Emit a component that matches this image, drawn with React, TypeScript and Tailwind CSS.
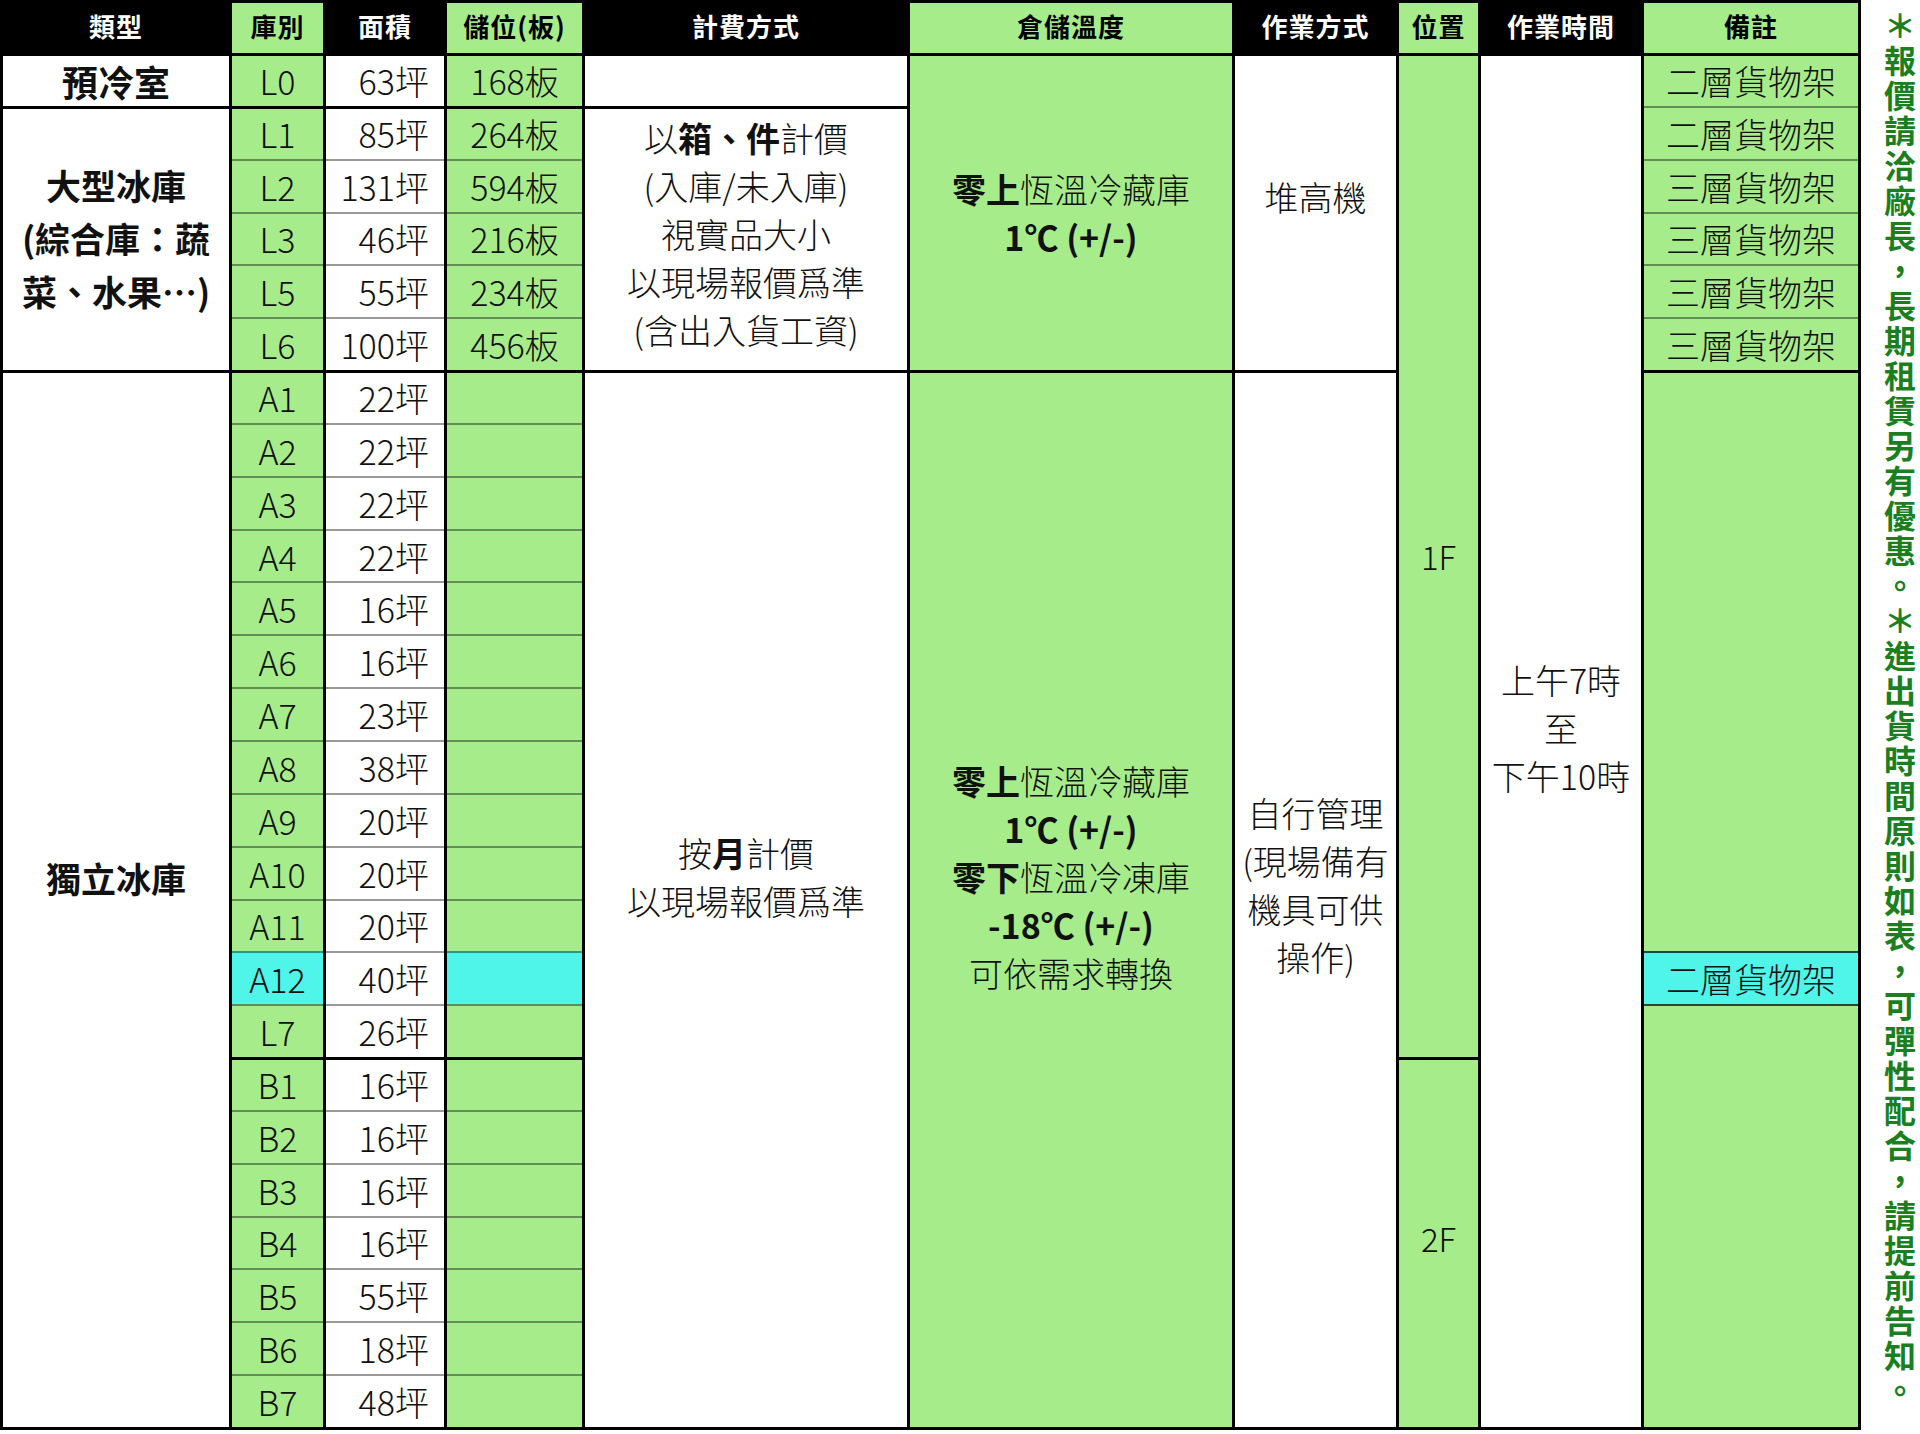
import React from "react"

const rows = [
  { k: "L0", a: "63坪", p: "168板" },
  { k: "L1", a: "85坪", p: "264板" },
  { k: "L2", a: "131坪", p: "594板" },
  { k: "L3", a: "46坪", p: "216板" },
  { k: "L5", a: "55坪", p: "234板" },
  { k: "L6", a: "100坪", p: "456板" },
  { k: "A1", a: "22坪" },
  { k: "A2", a: "22坪" },
  { k: "A3", a: "22坪" },
  { k: "A4", a: "22坪" },
  { k: "A5", a: "16坪" },
  { k: "A6", a: "16坪" },
  { k: "A7", a: "23坪" },
  { k: "A8", a: "38坪" },
  { k: "A9", a: "20坪" },
  { k: "A10", a: "20坪" },
  { k: "A11", a: "20坪" },
  { k: "A12", a: "40坪", cyan: true },
  { k: "L7", a: "26坪" },
  { k: "B1", a: "16坪" },
  { k: "B2", a: "16坪" },
  { k: "B3", a: "16坪" },
  { k: "B4", a: "16坪" },
  { k: "B5", a: "55坪" },
  { k: "B6", a: "18坪" },
  { k: "B7", a: "48坪" },
]

// index of rows that start a new group (thick black line above)
const thick = [0, 1, 6, 19]

function Head({ green, children }: { green?: boolean; children: React.ReactNode }) {
  return (
    <div
      className={`h-[50px] shrink-0 flex items-center justify-center pb-[6px] text-[26px] font-bold tracking-[1px] ${
        green ? "bg-[#a7ec8b] text-black" : "bg-black text-white"
      }`}
    >
      {children}
    </div>
  )
}

function Cell({ className, children }: { className: string; children?: React.ReactNode }) {
  return <div className={`shrink-0 flex flex-col items-center justify-center text-center ${className}`}>{children}</div>
}

const TH = "border-t-[3px] border-black"
const TN = "border-t-2 border-black/40"

export default function App() {
  return (
    <div className="w-[1920px] h-[1434px] bg-white flex font-['Noto_Sans_CJK_TC','Noto_Sans',sans-serif] text-[#111]">
      <div className="flex gap-[3px] bg-black border-[3px] border-black self-start">
        {/* 類型 */}
        <div className="flex flex-col w-[226px]">
          <Head>類型</Head>
          <Cell className={`h-[52.85px] bg-white ${TH} text-[36px] font-bold`}>預冷室</Cell>
          <Cell className={`h-[264.25px] bg-white ${TH} text-[35px] font-bold leading-[53px] pb-[4px]`}>
            <span>大型冰庫</span>
            <span>(綜合庫：蔬</span>
            <span>菜、水果…)</span>
          </Cell>
          <Cell className={`h-[1057px] bg-white ${TH} text-[35px] font-bold pb-[44px]`}>獨立冰庫</Cell>
        </div>

        {/* 庫別 */}
        <div className="flex flex-col w-[91px]">
          <Head green>庫別</Head>
          {rows.map((r, i) => (
            <Cell
              key={r.k}
              className={`h-[52.85px] text-[34px] font-light ${thick.includes(i) ? TH : TN} ${
                r.cyan ? "bg-[#4ef5e8]" : "bg-[#a7ec8b]"
              }`}
            >
              {r.k}
            </Cell>
          ))}
        </div>

        {/* 面積 */}
        <div className="flex flex-col w-[118px]">
          <Head>面積</Head>
          {rows.map((r, i) => (
            <div
              key={r.k}
              className={`h-[52.85px] shrink-0 flex items-center justify-end pr-[15px] bg-white text-[34px] font-light ${
                thick.includes(i) ? TH : TN
              }`}
            >
              {r.a}
            </div>
          ))}
        </div>

        {/* 儲位 */}
        <div className="flex flex-col w-[135px]">
          <Head green>儲位(板)</Head>
          {rows.map((r, i) => (
            <Cell
              key={r.k}
              className={`h-[52.85px] text-[34px] font-light ${thick.includes(i) ? TH : TN} ${
                r.cyan ? "bg-[#4ef5e8]" : "bg-[#a7ec8b]"
              }`}
            >
              {r.p}
            </Cell>
          ))}
        </div>

        {/* 計費方式 */}
        <div className="flex flex-col w-[322px]">
          <Head>計費方式</Head>
          <Cell className={`h-[52.85px] bg-white ${TH}`} />
          <Cell className={`h-[264.25px] bg-white ${TH} text-[34px] font-light leading-[48px] pb-[10px]`}>
            <span>
              以<b className="font-bold">箱、件</b>計價
            </span>
            <span>(入庫/未入庫)</span>
            <span>視實品大小</span>
            <span>以現場報價爲準</span>
            <span>(含出入貨工資)</span>
          </Cell>
          <Cell className={`h-[1057px] bg-white ${TH} text-[34px] font-light leading-[48px] pb-[46px]`}>
            <span>
              按<b className="font-bold">月</b>計價
            </span>
            <span>以現場報價爲準</span>
          </Cell>
        </div>

        {/* 倉儲溫度 */}
        <div className="flex flex-col w-[322px]">
          <Head green>倉儲溫度</Head>
          <Cell className={`h-[317.1px] bg-[#a7ec8b] ${TH} text-[34px] font-light leading-[48px]`}>
            <span>
              <b className="font-bold">零上</b>恆溫冷藏庫
            </span>
            <b className="font-bold">1℃ (+/-)</b>
          </Cell>
          <Cell className={`h-[1057px] bg-[#a7ec8b] ${TH} text-[34px] font-light leading-[48px] pb-[46px]`}>
            <span>
              <b className="font-bold">零上</b>恆溫冷藏庫
            </span>
            <b className="font-bold">1℃ (+/-)</b>
            <span>
              <b className="font-bold">零下</b>恆溫冷凍庫
            </span>
            <b className="font-bold">-18℃ (+/-)</b>
            <span>可依需求轉換</span>
          </Cell>
        </div>

        {/* 作業方式 */}
        <div className="flex flex-col w-[161px]">
          <Head>作業方式</Head>
          <Cell className={`h-[317.1px] bg-white ${TH} text-[34px] font-light pb-[34px]`}>堆高機</Cell>
          <Cell className={`h-[1057px] bg-white ${TH} text-[34px] font-light leading-[48px] pb-[30px]`}>
            <span>自行管理</span>
            <span>(現場備有</span>
            <span>機具可供</span>
            <span>操作)</span>
          </Cell>
        </div>

        {/* 位置 */}
        <div className="flex flex-col w-[79px]">
          <Head green>位置</Head>
          <Cell className={`h-[1004.15px] bg-[#a7ec8b] ${TH} text-[33px] font-light`}>1F</Cell>
          <Cell className={`h-[369.95px] bg-[#a7ec8b] ${TH} text-[33px] font-light pb-[10px]`}>2F</Cell>
        </div>

        {/* 作業時間 */}
        <div className="flex flex-col w-[160px]">
          <Head>作業時間</Head>
          <Cell className={`h-[1374.1px] bg-white ${TH} text-[34px] font-light leading-[48px] pb-[28px]`}>
            <span>上午7時</span>
            <span>至</span>
            <span>下午10時</span>
          </Cell>
        </div>

        {/* 備註 */}
        <div className="flex flex-col w-[214px]">
          <Head green>備註</Head>
          <Cell className={`h-[52.85px] bg-[#a7ec8b] ${TH} text-[34px] font-light`}>二層貨物架</Cell>
          <Cell className={`h-[52.85px] bg-[#a7ec8b] ${TN} text-[34px] font-light`}>二層貨物架</Cell>
          <Cell className={`h-[52.85px] bg-[#a7ec8b] ${TN} text-[34px] font-light`}>三層貨物架</Cell>
          <Cell className={`h-[52.85px] bg-[#a7ec8b] ${TN} text-[34px] font-light`}>三層貨物架</Cell>
          <Cell className={`h-[52.85px] bg-[#a7ec8b] ${TN} text-[34px] font-light`}>三層貨物架</Cell>
          <Cell className={`h-[52.85px] bg-[#a7ec8b] ${TN} text-[34px] font-light`}>三層貨物架</Cell>
          <Cell className={`h-[581.35px] bg-[#a7ec8b] ${TH}`} />
          <Cell className={`h-[52.85px] bg-[#4ef5e8] border-t-2 border-black/70 text-[34px] font-light`}>二層貨物架</Cell>
          <Cell className={`h-[422.8px] bg-[#a7ec8b] border-t-2 border-black/70`} />
        </div>
      </div>

      <div className="flex-1 flex justify-end pr-[4px] pt-[10px]">
        <div className="[writing-mode:vertical-rl] text-[32px] font-bold leading-none tracking-[3px] text-[#1b7f1f]">
          ＊報價請洽廠長，長期租賃另有優惠。＊進出貨時間原則如表，可彈性配合，請提前告知。
        </div>
      </div>
    </div>
  )
}
